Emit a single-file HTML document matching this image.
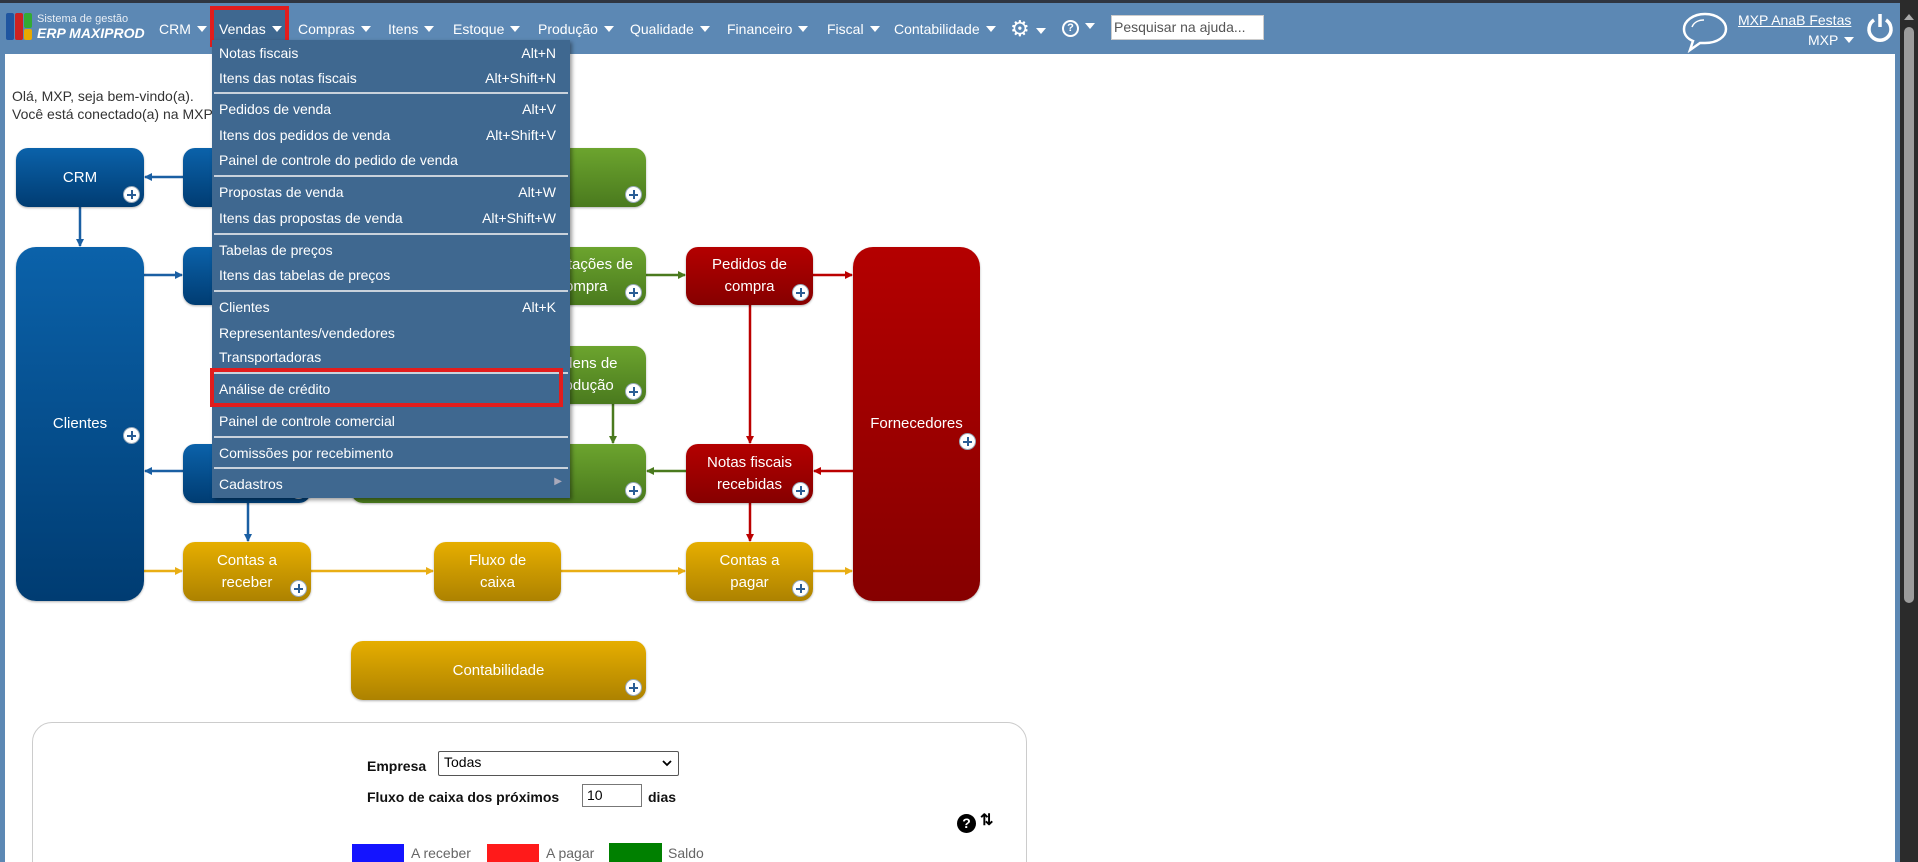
<!DOCTYPE html>
<html style="overflow:hidden;width:1918px;height:862px"><head><meta charset="utf-8"><style>
*{margin:0;padding:0;box-sizing:border-box}
body{width:1918px;height:862px;overflow:hidden;background:#fff;font-family:"Liberation Sans",Arial,sans-serif;position:relative}
#wrap{position:absolute;left:0;top:0;width:1918px;height:862px;overflow:hidden}
.abs{position:absolute}
#top{left:0;top:0;width:1900px;height:54px;background:#5c88b4;border-top:3px solid #2f3540}
.nav{position:absolute;top:18px;color:#fff;font-size:14px;white-space:nowrap}
.tri{display:inline-block;width:0;height:0;border-left:5px solid transparent;border-right:5px solid transparent;border-top:6px solid #fff;margin-left:6px;vertical-align:2px}
.box{position:absolute;border-radius:12px;color:#fff;font-size:15px;text-align:center;display:flex;align-items:center;justify-content:center;line-height:22px;box-shadow:0 1px 2px rgba(0,0,0,.3)}
.b{background:linear-gradient(#0b62aa,#003c72)}
.g{background:linear-gradient(#6ca42e,#4a7a1e)}
.r{background:linear-gradient(#b40000,#860000)}
.y{background:linear-gradient(#e6ae00,#ad8200)}
.pl{position:absolute;right:4px;bottom:4px;width:17px;height:17px;border-radius:50%;background:#fff;border:1px solid #9ab}
.pl:before{content:"";position:absolute;left:3px;top:7px;width:9px;height:2px;background:#2a5d95}
.pl:after{content:"";position:absolute;left:7px;top:3px;width:2px;height:9px;background:#2a5d95}
#menu{left:212px;top:40px;width:358px;height:458px;background:#3f6890;box-shadow:2px 2px 4px rgba(0,0,0,.4);color:#fff;font-size:14px}
.mi{position:absolute;left:7px;right:14px;height:20px}
.mi span{position:absolute;right:0}
.sep{position:absolute;left:2px;right:2px;height:2px;background:#c9d2dc}
.lg{position:absolute;top:845px;font-size:14px;line-height:16px;height:16px;color:#666}
</style></head><body><div id="wrap">
<div class="abs" style="left:0;top:0;width:5px;height:862px;background:#5c88b4"></div>
<div class="abs" style="left:1895px;top:0;width:5px;height:862px;background:#5c88b4"></div>
<div class="abs" style="left:1900px;top:0;width:18px;height:862px;background:#2b2b2b"></div>
<div class="abs" style="left:1904px;top:14px;width:0;height:0;border-left:5px solid transparent;border-right:5px solid transparent;border-bottom:6px solid #aaa"></div>
<div class="abs" style="left:1904px;top:27px;width:10px;height:576px;background:#9c9c9c;border-radius:5px"></div>

<div id="top" class="abs">
 <div class="abs" style="left:6px;top:10px;width:8px;height:27px;background:#1f55a0;border-radius:2px"></div>
 <div class="abs" style="left:15px;top:10px;width:8px;height:27px;background:#c22;border-radius:2px"></div>
 <div class="abs" style="left:24px;top:10px;width:8px;height:15px;background:#3a3;border-radius:2px"></div>
 <div class="abs" style="left:24px;top:26px;width:8px;height:11px;background:#e8a800;border-radius:2px"></div>
 <div class="nav" style="left:37px;top:10px;font-size:11px;color:#e8eef5">Sistema de gestão</div>
 <div class="nav" style="left:37px;top:22px;font-size:14px;font-weight:bold;font-style:italic">ERP MAXIPROD</div>
 <div class="nav" style="left:159px">CRM<i class="tri"></i></div>
 <div class="abs" style="left:210px;top:3px;width:79px;height:41px;border:4px solid #e21d1d;background:#3f6890"></div>
 <div class="nav" style="left:219px">Vendas<i class="tri"></i></div>
 <div class="nav" style="left:298px">Compras<i class="tri"></i></div>
 <div class="nav" style="left:388px">Itens<i class="tri"></i></div>
 <div class="nav" style="left:453px">Estoque<i class="tri"></i></div>
 <div class="nav" style="left:538px">Produção<i class="tri"></i></div>
 <div class="nav" style="left:630px">Qualidade<i class="tri"></i></div>
 <div class="nav" style="left:727px">Financeiro<i class="tri"></i></div>
 <div class="nav" style="left:827px">Fiscal<i class="tri"></i></div>
 <div class="nav" style="left:894px">Contabilidade<i class="tri"></i></div>
 <div class="nav" style="left:1010px;top:13px;font-size:22px">⚙<i class="tri"></i></div>
 <div class="nav" style="left:1062px;top:15px"><span style="display:inline-block;width:17px;height:17px;border:2px solid #fff;border-radius:50%;font-size:11px;text-align:center;line-height:13px;font-weight:bold">?</span><i class="tri"></i></div>
 <div class="abs" style="left:1111px;top:12px;width:153px;height:25px;background:#fff;border:1px solid #ccc;font-size:14px;color:#555;padding:3px 2px">Pesquisar na ajuda...</div>
 <svg class="abs" style="left:1680px;top:8px" width="50" height="42" viewBox="0 0 50 42"><path d="M25 3C13 3 4 10 4 18c0 6 4 10 9 12l-3 9 10-7c2 0 3 0 5 0 12 0 21-6 21-14S37 3 25 3z" fill="none" stroke="#fff" stroke-width="2.5"/><path d="M12 16c2-5 7-7 12-7" fill="none" stroke="#fff" stroke-width="1.5"/></svg>
 <div class="nav" style="left:1738px;top:9px;text-decoration:underline">MXP AnaB Festas</div>
 <div class="nav" style="left:1808px;top:29px">MXP<i class="tri"></i></div>
 <svg class="abs" style="left:1865px;top:8px" width="30" height="34" viewBox="0 0 30 34"><path d="M9 9a11 11 0 1 0 12 0" fill="none" stroke="#fff" stroke-width="3.5"/><line x1="15" y1="3" x2="15" y2="16" stroke="#fff" stroke-width="3.5"/></svg>
</div>

<div class="abs" style="left:12px;top:87px;font-size:14px;color:#333;line-height:18px">Olá, MXP, seja bem-vindo(a).<br>Você está conectado(a) na MXP</div>

<svg class="abs" style="left:0;top:0" width="1000" height="720">
 <defs>
  <marker id="ab" markerWidth="8" markerHeight="8" refX="7" refY="4" orient="auto" markerUnits="userSpaceOnUse"><path d="M0 0L8 4L0 8z" fill="#1a5fa3"/></marker>
  <marker id="ag" markerWidth="8" markerHeight="8" refX="7" refY="4" orient="auto" markerUnits="userSpaceOnUse"><path d="M0 0L8 4L0 8z" fill="#4a7a1e"/></marker>
  <marker id="ar" markerWidth="8" markerHeight="8" refX="7" refY="4" orient="auto" markerUnits="userSpaceOnUse"><path d="M0 0L8 4L0 8z" fill="#b00"/></marker>
  <marker id="ay" markerWidth="8" markerHeight="8" refX="7" refY="4" orient="auto" markerUnits="userSpaceOnUse"><path d="M0 0L8 4L0 8z" fill="#e9ae14"/></marker>
 </defs>
 <g stroke-width="2.5" fill="none">
  <line x1="80" y1="207" x2="80" y2="246" stroke="#1a5fa3" marker-end="url(#ab)"/>
  <line x1="183" y1="177" x2="145" y2="177" stroke="#1a5fa3" marker-end="url(#ab)"/>
  <line x1="144" y1="275" x2="182" y2="275" stroke="#1a5fa3" marker-end="url(#ab)"/>
  <line x1="183" y1="471" x2="145" y2="471" stroke="#1a5fa3" marker-end="url(#ab)"/>
  <line x1="248" y1="503" x2="248" y2="541" stroke="#1a5fa3" marker-end="url(#ab)"/>
  <line x1="646" y1="275" x2="685" y2="275" stroke="#4a7a1e" marker-end="url(#ag)"/>
  <line x1="613" y1="404" x2="613" y2="443" stroke="#4a7a1e" marker-end="url(#ag)"/>
  <line x1="686" y1="471" x2="647" y2="471" stroke="#4a7a1e" marker-end="url(#ag)"/>
  <line x1="813" y1="275" x2="852" y2="275" stroke="#b00" marker-end="url(#ar)"/>
  <line x1="750" y1="305" x2="750" y2="443" stroke="#b00" marker-end="url(#ar)"/>
  <line x1="853" y1="471" x2="814" y2="471" stroke="#b00" marker-end="url(#ar)"/>
  <line x1="750" y1="503" x2="750" y2="541" stroke="#b00" marker-end="url(#ar)"/>
  <line x1="144" y1="571" x2="182" y2="571" stroke="#e9ae14" marker-end="url(#ay)"/>
  <line x1="311" y1="571" x2="433" y2="571" stroke="#e9ae14" marker-end="url(#ay)"/>
  <line x1="561" y1="571" x2="685" y2="571" stroke="#e9ae14" marker-end="url(#ay)"/>
  <line x1="813" y1="571" x2="852" y2="571" stroke="#e9ae14" marker-end="url(#ay)"/>
 </g>
</svg>

<div class="box b" style="left:16px;top:148px;width:128px;height:59px">CRM<i class="pl"></i></div>
<div class="box b" style="left:183px;top:148px;width:128px;height:59px">Propostas<i class="pl"></i></div>
<div class="box g" style="left:351px;top:148px;width:295px;height:59px">&nbsp;<i class="pl"></i></div>
<div class="box b" style="left:16px;top:247px;width:128px;height:354px;border-radius:20px">Clientes<i class="pl" style="bottom:auto;top:180px"></i></div>
<div class="box b" style="left:183px;top:247px;width:128px;height:58px">Pedidos<i class="pl"></i></div>
<div class="box g" style="left:519px;top:247px;width:127px;height:58px">Solicitações de<br>compra<i class="pl"></i></div>
<div class="box r" style="left:686px;top:247px;width:127px;height:58px">Pedidos de<br>compra<i class="pl"></i></div>
<div class="box r" style="left:853px;top:247px;width:127px;height:354px;border-radius:20px">Fornecedores<i class="pl" style="bottom:auto;top:186px"></i></div>
<div class="box g" style="left:519px;top:346px;width:127px;height:58px">Ordens de<br>produção<i class="pl"></i></div>
<div class="box b" style="left:183px;top:444px;width:128px;height:59px">Notas<i class="pl"></i></div>
<div class="box g" style="left:351px;top:444px;width:295px;height:59px">Estoque<i class="pl"></i></div>
<div class="box r" style="left:686px;top:444px;width:127px;height:59px">Notas fiscais<br>recebidas<i class="pl"></i></div>
<div class="box y" style="left:183px;top:542px;width:128px;height:59px">Contas a<br>receber<i class="pl"></i></div>
<div class="box y" style="left:434px;top:542px;width:127px;height:59px">Fluxo de<br>caixa</div>
<div class="box y" style="left:686px;top:542px;width:127px;height:59px">Contas a<br>pagar<i class="pl"></i></div>
<div class="box y" style="left:351px;top:641px;width:295px;height:59px">Contabilidade<i class="pl"></i></div>

<div id="menu" class="abs">
 <div class="mi" style="top:5px">Notas fiscais<span>Alt+N</span></div>
 <div class="mi" style="top:30px">Itens das notas fiscais<span>Alt+Shift+N</span></div>
 <div class="sep" style="top:52px"></div>
 <div class="mi" style="top:61px">Pedidos de venda<span>Alt+V</span></div>
 <div class="mi" style="top:87px">Itens dos pedidos de venda<span>Alt+Shift+V</span></div>
 <div class="mi" style="top:112px">Painel de controle do pedido de venda</div>
 <div class="sep" style="top:135px"></div>
 <div class="mi" style="top:144px">Propostas de venda<span>Alt+W</span></div>
 <div class="mi" style="top:170px">Itens das propostas de venda<span>Alt+Shift+W</span></div>
 <div class="sep" style="top:193px"></div>
 <div class="mi" style="top:202px">Tabelas de preços</div>
 <div class="mi" style="top:227px">Itens das tabelas de preços</div>
 <div class="sep" style="top:250px"></div>
 <div class="mi" style="top:259px">Clientes<span>Alt+K</span></div>
 <div class="mi" style="top:285px">Representantes/vendedores</div>
 <div class="mi" style="top:309px">Transportadoras</div>
 <div class="sep" style="top:332px"></div>
 <div class="mi" style="top:341px">Análise de crédito</div>
 <div class="mi" style="top:373px">Painel de controle comercial</div>
 <div class="sep" style="top:396px"></div>
 <div class="mi" style="top:405px">Comissões por recebimento</div>
 <div class="sep" style="top:427px"></div>
 <div class="mi" style="top:436px">Cadastros<span style="right:-6px;font-size:10px;color:#aab">▶</span></div>
</div>
<div class="abs" style="left:210px;top:368px;width:353px;height:39px;border:4px solid #e21d1d"></div>

<div class="abs" style="left:32px;top:722px;width:995px;height:140px;overflow:hidden">
 <div style="width:995px;height:200px;border:1px solid #ccc;border-radius:20px"></div>
</div>
<div class="abs" style="left:367px;top:758px;font-size:14px;font-weight:bold;color:#111">Empresa</div>
<div class="abs" style="left:438px;top:751px;width:241px;height:25px;border:1px solid #555;border-radius:2px;font-size:14px;padding:2px 5px">Todas<svg style="position:absolute;right:6px;top:8px" width="10" height="7"><path d="M1 1l4 4 4-4" stroke="#000" stroke-width="1.8" fill="none"/></svg></div>
<div class="abs" style="left:367px;top:789px;font-size:14px;font-weight:bold;color:#111">Fluxo de caixa dos próximos</div>
<div class="abs" style="left:582px;top:784px;width:60px;height:23px;border:1px solid #777;font-size:14px;padding:2px 4px">10</div>
<div class="abs" style="left:648px;top:789px;font-size:14px;font-weight:bold;color:#111">dias</div>
<div class="abs" style="left:957px;top:814px;width:19px;height:19px;border-radius:50%;background:#000;color:#fff;font-size:14px;font-weight:bold;text-align:center;line-height:19px">?</div>
<div class="abs" style="left:980px;top:812px;font-size:16px;font-weight:bold;line-height:18px">⇅</div>
<div class="abs" style="left:352px;top:844px;width:52px;height:18px;background:#1414ff"></div>
<div class="lg" style="left:411px">A receber</div>
<div class="abs" style="left:487px;top:844px;width:52px;height:18px;background:#ff1a1a"></div>
<div class="lg" style="left:546px">A pagar</div>
<div class="abs" style="left:609px;top:843px;width:53px;height:19px;background:#008000"></div>
<div class="lg" style="left:668px">Saldo</div>
</div></body></html>
